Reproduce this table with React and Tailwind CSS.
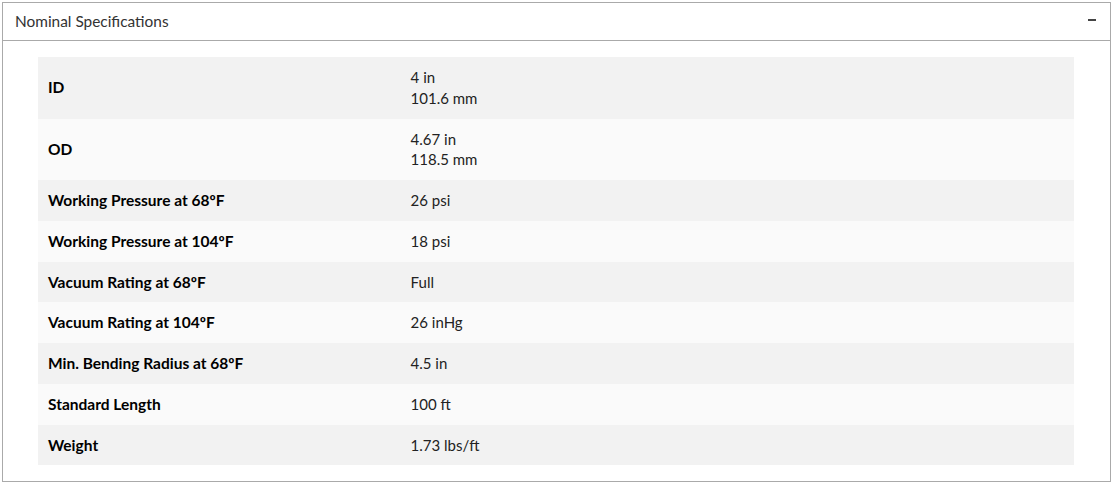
import React from 'react';

const specs = [
    { label: 'ID', value: ['4 in', '101.6 mm'] },
    { label: 'OD', value: ['4.67 in', '118.5 mm'] },
    { label: 'Working Pressure at 68ºF', value: ['26 psi'] },
    { label: 'Working Pressure at 104ºF', value: ['18 psi'] },
    { label: 'Vacuum Rating at 68ºF', value: ['Full'] },
    { label: 'Vacuum Rating at 104ºF', value: ['26 inHg'] },
    { label: 'Min. Bending Radius at 68ºF', value: ['4.5 in'] },
    { label: 'Standard Length', value: ['100 ft'] },
    { label: 'Weight', value: ['1.73 lbs/ft'] }
];

const App = () => {
    return (
        <div className="p-[2px] bg-white" style={{ fontFamily: 'Lato, "Open Sans", sans-serif' }}>
            <div className="border border-[#aaaaaa] bg-white h-[480px]">
                <div className="h-[38px] border-b border-[#aaaaaa] flex items-center justify-between pl-3 pr-3">
                    <span className="text-[15.4px] text-[#333]">Nominal Specifications</span>
                    <span className="block w-2 h-[2px] bg-[#444] mr-[2px] -mt-[4px]"></span>
                </div>
                <div className="pl-[35px] pr-[36px] pt-4">
                    <table className="w-full border-collapse text-[15px] leading-[20.75px] text-[#222]">
                        <tbody>
                            {specs.map((row, i) => (
                                <tr key={row.label} className={i % 2 === 0 ? 'bg-[#f2f2f2]' : 'bg-[#fafafa]'}>
                                    <td className="w-[35%] px-[10px] py-[10px] text-[15.5px] font-bold text-black align-middle">{row.label}</td>
                                    <td className="px-[10px] py-[10px] align-middle">
                                        {row.value.map(v => (
                                            <div key={v}>{v}</div>
                                        ))}
                                    </td>
                                </tr>
                            ))}
                        </tbody>
                    </table>
                </div>
            </div>
        </div>
    );
};

export default App;
